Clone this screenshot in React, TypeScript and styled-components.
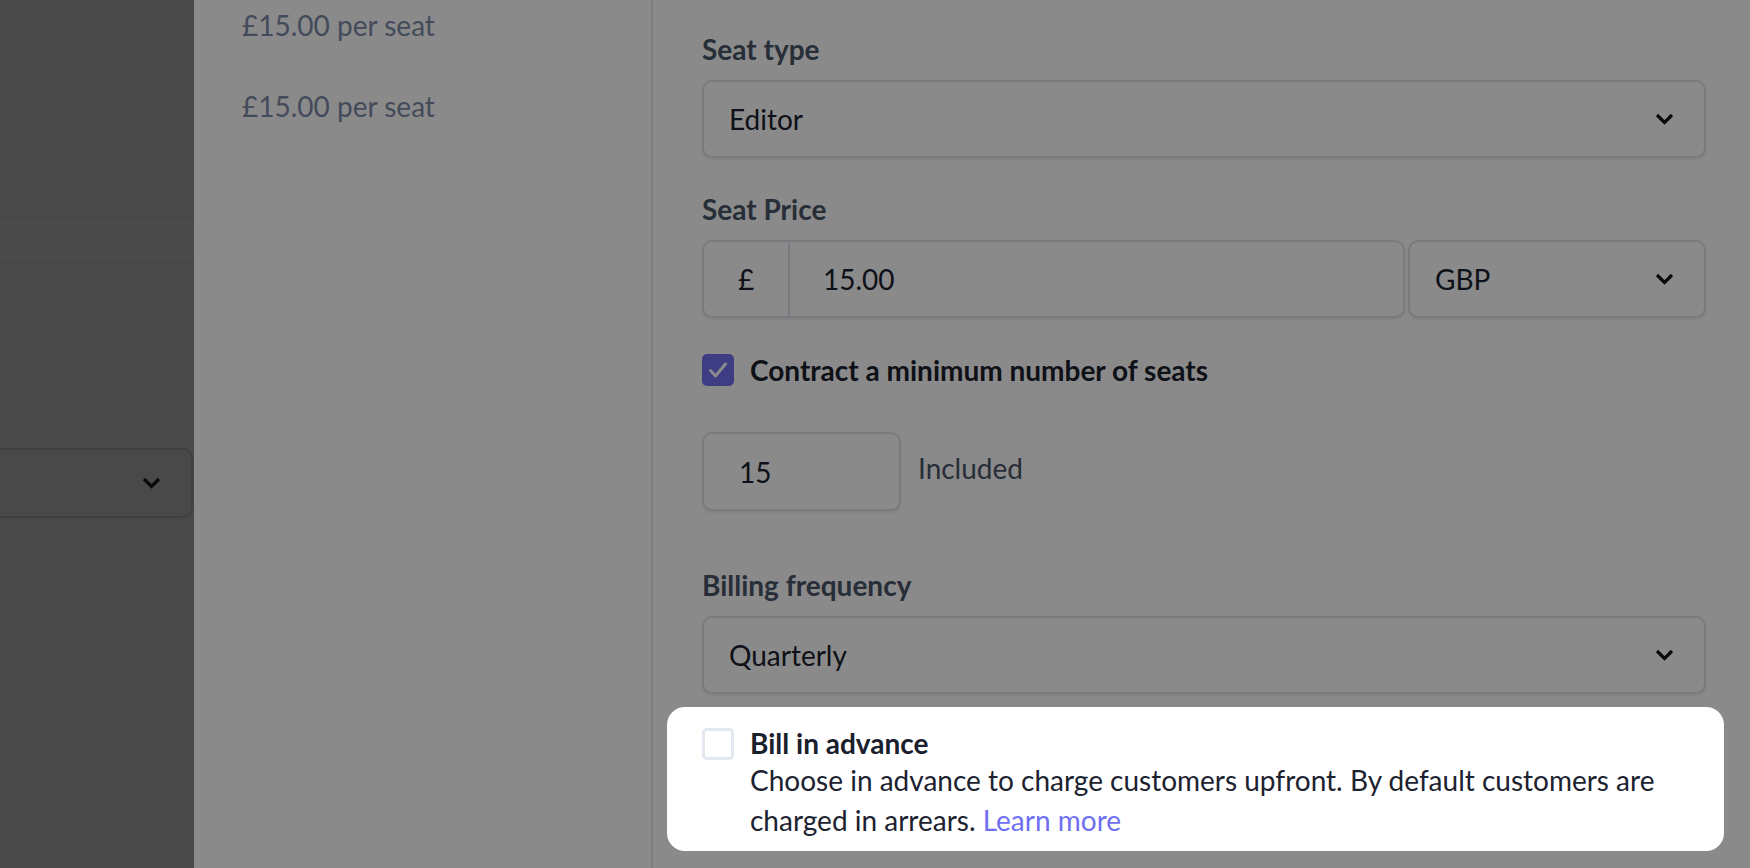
import React from 'react';
import styled, { createGlobalStyle } from 'styled-components';

const GlobalStyle = createGlobalStyle`
  html, body {
    margin: 0;
    padding: 0;
    overflow: hidden;
    background: #ffffff;
  }
  body {
    font-family: Lato, "Open Sans", "Liberation Sans", sans-serif;
  }
`;

// Whole page, dimmed by the spotlight's shadow
const Page = styled.div`
  display: flex;
  width: 1750px;
  height: 868px;
  overflow: hidden;
  background: #ffffff;
`;

// Page behind the drawer (already dimmed by its own backdrop)
const BackPane = styled.div`
  width: 194px;
  flex-shrink: 0;
  display: flex;
  flex-direction: column;
  background: #888888;
`;

const BackHeader = styled.div`
  margin-top: 218px;
  height: 42px;
  border-top: 1px solid #808080;
  border-bottom: 1px solid #808080;
  background: #8a8a8a;
`;

const BackSelect = styled.div`
  margin: 186px 0 0 -20px;
  width: 213px;
  height: 70px;
  box-sizing: border-box;
  border: 2px solid #767676;
  border-radius: 10px;
  display: flex;
  align-items: center;
  justify-content: flex-end;
  padding-right: 30px;
`;

const ListPane = styled.div`
  width: 459px;
  flex-shrink: 0;
  box-sizing: border-box;
  padding: 7px 0 0 48px;
  border-right: 2px solid #e4e8ef;
  display: flex;
  flex-direction: column;
  gap: 45px;
`;

const PriceLine = styled.div`
  font-size: 28px;
  line-height: 36px;
  color: #7d8ba6;
`;

const FormPane = styled.div`
  flex: 1;
  display: flex;
  flex-direction: column;
  align-items: stretch;
  padding: 31px 44px 0 49px;
`;

const Label = styled.div<{ $gap?: number }>`
  font-size: 28px;
  line-height: 36px;
  font-weight: 700;
  color: #4a5568;
  margin-top: ${(p) => p.$gap ?? 0}px;
  margin-bottom: 13px;
`;

const Box = styled.div<{ $width?: number; $grow?: boolean }>`
  height: 78px;
  box-sizing: border-box;
  flex: ${(p) => (p.$grow ? '1 1 auto' : 'none')};
  ${(p) => (p.$width ? `width: ${p.$width}px;` : '')}
  border: 2px solid #dde2eb;
  border-radius: 10px;
  box-shadow: 0 2px 3px rgba(0, 0, 0, 0.07);
  background: #ffffff;
  display: flex;
  align-items: center;
  font-size: 28px;
  color: #1a202c;
`;

const SelectBox = styled(Box)`
  justify-content: space-between;
  padding: 0 30px 0 25px;
`;

const CountBox = styled(Box)`
  height: 79px;
`;

const PriceRow = styled.div`
  display: flex;
  gap: 3px;
`;

const Prefix = styled.div`
  width: 84px;
  align-self: stretch;
  display: flex;
  align-items: center;
  justify-content: center;
  border-right: 2px solid #dde2eb;
`;

const InputText = styled.div<{ $pad: number }>`
  padding-left: ${(p) => p.$pad}px;
`;

const CheckRow = styled.div`
  display: flex;
  align-items: center;
  gap: 16px;
  margin-top: 34px;
`;

const Check = styled.div<{ $on?: boolean }>`
  width: 32px;
  height: 32px;
  box-sizing: border-box;
  flex-shrink: 0;
  border-radius: 5px;
  display: flex;
  align-items: center;
  justify-content: center;
  background: ${(p) => (p.$on ? '#7370f2' : '#ffffff')};
  border: ${(p) => (p.$on ? 'none' : '3px solid #e3e8f0')};
`;

const CheckLabel = styled.div<{ $lh?: number }>`
  font-size: 28px;
  line-height: ${(p) => p.$lh ?? 36}px;
  font-weight: 700;
  color: #1a202c;
`;

const CountRow = styled.div`
  display: flex;
  align-items: center;
  gap: 17px;
  margin-top: 44px;
`;

const Hint = styled.div`
  font-size: 28px;
  color: #4a5568;
  margin-top: -8px;
`;

// Tour spotlight: everything outside it is dimmed by its shadow
const Spotlight = styled.div`
  position: relative;
  z-index: 1;
  margin: 13px -18px 0 -35px;
  height: 144px;
  box-sizing: border-box;
  padding: 19px 18px 0 35px;
  border-radius: 18px;
  background: #ffffff;
  box-shadow: 0 0 0 3000px rgba(0, 0, 0, 0.46);
  display: flex;
  gap: 16px;
`;

const SpotCheck = styled(Check)`
  margin-top: 2px;
`;

const SpotText = styled.div`
  display: flex;
  flex-direction: column;
`;

const Desc = styled.div`
  font-size: 28px;
  line-height: 40px;
  color: #1c2230;
`;

const LearnMore = styled.a`
  color: #6f6ff1;
  text-decoration: none;
  cursor: pointer;
`;

const Chevron = () => (
  <svg width="19" height="12" viewBox="0 0 19 12" fill="none">
    <path d="M2 2l7.5 7.5L17 2" stroke="#111111" strokeWidth="3.2" />
  </svg>
);

const Tick = () => (
  <svg width="22" height="18" viewBox="0 0 22 18" fill="none">
    <path d="M3.5 9.5l5 5.5L18.5 3" stroke="#ffffff" strokeWidth="3" strokeLinecap="round" strokeLinejoin="round" />
  </svg>
);

const App: React.FC = () => {
  return (
    <>
      <GlobalStyle />
      <Page>
        <BackPane>
          <BackHeader />
          <BackSelect>
            <Chevron />
          </BackSelect>
        </BackPane>

        <ListPane>
          <PriceLine>£15.00 per seat</PriceLine>
          <PriceLine>£15.00 per seat</PriceLine>
        </ListPane>

        <FormPane>
          <Label>Seat type</Label>
          <SelectBox>
            <span>Editor</span>
            <Chevron />
          </SelectBox>

          <Label $gap={33}>Seat Price</Label>
          <PriceRow>
            <Box $grow>
              <Prefix>£</Prefix>
              <InputText $pad={33}>15.00</InputText>
            </Box>
            <SelectBox $width={298}>
              <span>GBP</span>
              <Chevron />
            </SelectBox>
          </PriceRow>

          <CheckRow>
            <Check $on>
              <Tick />
            </Check>
            <CheckLabel>Contract a minimum number of seats</CheckLabel>
          </CheckRow>

          <CountRow>
            <CountBox $width={199}>
              <InputText $pad={35}>15</InputText>
            </CountBox>
            <Hint>Included</Hint>
          </CountRow>

          <Label $gap={56}>Billing frequency</Label>
          <SelectBox>
            <span>Quarterly</span>
            <Chevron />
          </SelectBox>

          <Spotlight>
            <SpotCheck />
            <SpotText>
              <CheckLabel $lh={34}>Bill in advance</CheckLabel>
              <Desc>
                Choose in advance to charge customers upfront. By default customers are
                charged in arrears. <LearnMore>Learn more</LearnMore>
              </Desc>
            </SpotText>
          </Spotlight>
        </FormPane>
      </Page>
    </>
  );
};

export default App;
